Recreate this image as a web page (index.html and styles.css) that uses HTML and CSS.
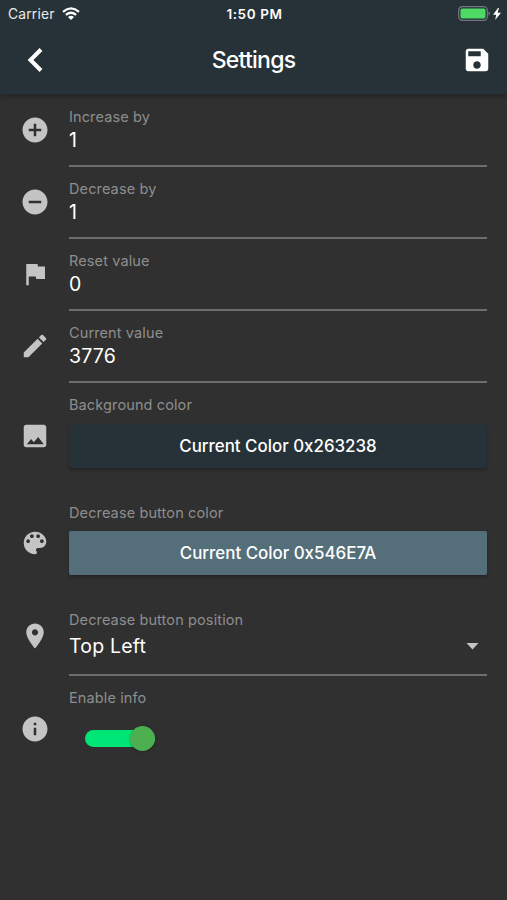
FILE: index.html
```html
<!DOCTYPE html>
<html lang="en">
<head>
<meta charset="utf-8">
<title>Settings</title>
<link rel="stylesheet" href="styles.css">
</head>
<body>
<header class="appbar">
  <div class="status">
    <div class="carrier"><span class="carrier-name">Carrier</span>
      <svg class="wifi" viewBox="0 0 18 13" fill="none" stroke="#fff" stroke-width="2.2"><path d="M1 4.8Q9-2 17 4.8M3.9 7.9Q9 3.6 14.1 7.9"/><path d="M6 10Q9 7.6 12 10L9 13Z" fill="#fff" stroke="none"/></svg>
    </div>
    <span class="time">1:50 PM</span>
    <div class="power">
      <svg class="battery" viewBox="0 0 32 15"><rect x=".7" y=".7" width="28.6" height="13.6" rx="3.6" fill="none" stroke="#6f797d" stroke-width="1.2"/><rect x="2.5" y="2.5" width="25" height="10" rx="1.7" fill="#4cd964"/><path d="M30.5 5.2Q32 6 32 7.5T30.5 9.8Z" fill="#6f797d"/></svg>
      <svg class="bolt" viewBox="0 0 8 12"><path d="M5 0L0 6.8H3.2L2.2 12L8 4.7H4.6L6 0Z" fill="#fff"/></svg>
    </div>
  </div>
  <div class="toolbar">
    <svg class="back" viewBox="0 0 16 26"><path d="M14 2.5L3.5 13L14 23.5" fill="none" stroke="#fff" stroke-width="4"/></svg>
    <h1 class="title">Settings</h1>
    <svg class="save" viewBox="0 0 24 24"><path fill="#fff" d="M17 3H5c-1.11 0-2 .9-2 2v14c0 1.1.89 2 2 2h14c1.1 0 2-.9 2-2V7l-4-4zm-5 16c-1.66 0-3-1.34-3-3s1.34-3 3-3 3 1.34 3 3-1.34 3-3 3zm3-10H5V5h10v4z"/></svg>
  </div>
</header>
<main class="settings">
  <section class="row">
    <svg class="icon" viewBox="0 0 24 24"><path d="M12 2C6.48 2 2 6.48 2 12s4.48 10 10 10 10-4.48 10-10S17.52 2 12 2zm5 11h-4v4h-2v-4H7v-2h4V7h2v4h4v2z"/></svg>
    <div class="field lined"><div class="label">Increase by</div><div class="value">1</div></div>
  </section>
  <section class="row">
    <svg class="icon" viewBox="0 0 24 24"><path d="M12 2C6.48 2 2 6.48 2 12s4.48 10 10 10 10-4.48 10-10S17.52 2 12 2zm5 11H7v-2h10v2z"/></svg>
    <div class="field lined"><div class="label">Decrease by</div><div class="value">1</div></div>
  </section>
  <section class="row">
    <svg class="icon" viewBox="0 0 24 24"><path d="M14.4 6L14 4H5v17h2v-7h5.6l.4 2h7V6z"/></svg>
    <div class="field lined"><div class="label">Reset value</div><div class="value">0</div></div>
  </section>
  <section class="row">
    <svg class="icon" viewBox="0 0 24 24"><path d="M3 17.25V21h3.75L17.81 9.94l-3.75-3.75L3 17.25zM20.71 7.04c.39-.39.39-1.02 0-1.41l-2.34-2.34c-.39-.39-1.02-.39-1.41 0l-1.83 1.83 3.75 3.75 1.83-1.83z"/></svg>
    <div class="field lined"><div class="label">Current value</div><div class="value">3776</div></div>
  </section>
  <section class="row tall">
    <svg class="icon" viewBox="0 0 24 24"><path d="M21 19V5c0-1.1-.9-2-2-2H5c-1.1 0-2 .9-2 2v14c0 1.1.9 2 2 2h14c1.1 0 2-.9 2-2zM8.900 14.3l2.200 2.700L14.500 12.700l4.500 5.800H5.500z"/></svg>
    <div class="field"><div class="label">Background color</div><button class="swatch navy">Current Color 0x263238</button></div>
  </section>
  <section class="row tall">
    <svg class="icon" viewBox="0 0 24 24"><path d="M12 3c-4.970 0-9 4.030-9 9s4.030 9 9 9c.83 0 1.500-.67 1.500-1.500 0-.39-.15-.74-.39-1.010-.23-.26-.38-.61-.38-.99 0-.83.67-1.500 1.500-1.500H16c2.760 0 5-2.240 5-5 0-4.420-4.030-8-9-8zm-5.500 9c-.83 0-1.500-.67-1.500-1.500S5.670 9 6.500 9 8 9.670 8 10.500 7.330 12 6.500 12zm3-4C8.670 8 8 7.330 8 6.500S8.670 5 9.500 5s1.500.67 1.500 1.500S10.330 8 9.500 8zm5 0c-.83 0-1.500-.67-1.500-1.500S13.670 5 14.500 5s1.500.67 1.500 1.500S15.330 8 14.500 8zm3 4c-.83 0-1.500-.67-1.500-1.500S16.670 9 17.500 9s1.500.67 1.500 1.500-.67 1.500-1.500 1.500z"/></svg>
    <div class="field"><div class="label">Decrease button color</div><button class="swatch slate">Current Color 0x546E7A</button></div>
  </section>
  <section class="row select-row">
    <svg class="icon" viewBox="0 0 24 24"><path d="M12 2C8.130 2 5 5.130 5 9c0 5.250 7 13 7 13s7-7.750 7-13c0-3.870-3.130-7-7-7zm0 9.500c-1.380 0-2.500-1.120-2.500-2.500s1.120-2.500 2.500-2.500 2.500 1.120 2.500 2.500-1.120 2.500-2.500 2.500z"/></svg>
    <div class="field lined"><div class="label">Decrease button position</div><div class="value choice"><span>Top Left</span><svg class="caret" viewBox="0 0 12 7"><path d="M0 0h12L6 6.5z"/></svg></div></div>
  </section>
  <section class="row tall">
    <svg class="icon" viewBox="0 0 24 24"><path d="M12 2C6.480 2 2 6.480 2 12s4.480 10 10 10 10-4.480 10-10S17.520 2 12 2zm1 15h-2v-6h2v6zm0-8h-2V7h2v2z"/></svg>
    <div class="field"><div class="label">Enable info</div><div class="switch"><div class="knob"></div></div></div>
  </section>
</main>
</body>
</html>
```
FILE: styles.css
```css
* { box-sizing: border-box; }
body {
  margin: 0;
  height: 900px;
  overflow: hidden;
  background: #303030;
  border-bottom: 1px solid #352c33;
  color: #fff;
  font-family: Inter, "Liberation Sans", sans-serif;
}
svg { display: block; flex: none; }
.appbar {
  height: 94px;
  background: #263238;
  box-shadow: 0 2px 5px rgba(0, 0, 0, .3);
}
.status {
  display: grid;
  grid-template-columns: 1fr auto 1fr;
  align-items: center;
  height: 27px;
  padding: 0 6px 0 8px;
  font-size: 13.8px;
}
.carrier { display: flex; align-items: center; gap: 7px; }
.carrier-name { letter-spacing: .2px; color: #e8eaeb; }
.wifi { width: 18px; height: 13px; }
.time { font-weight: 600; font-size: 13.5px; letter-spacing: .6px; }
.power { display: flex; justify-content: flex-end; align-items: center; gap: 3px; }
.battery { width: 32px; height: 15px; }
.bolt { width: 8px; height: 12px; }
.toolbar {
  display: grid;
  grid-template-columns: 40px 1fr 40px;
  align-items: center;
  height: 65px;
  padding: 0 15px 0 15px;
}
.back { width: 16px; height: 26px; margin-left: 12px; }
.title { margin: 0; text-align: center; font-size: 23px; font-weight: 500; letter-spacing: -.75px; }
.save { width: 30px; height: 30px; justify-self: end; }
.settings { padding: 1px 20px 0; }
.row { display: flex; align-items: center; gap: 19px; height: 72px; }
.tall { height: 107.6px; }
.select-row { height: 78px; }
.icon { width: 30px; height: 30px; margin-bottom: 2px; fill: #c4c4c4; }
.field { flex: 1; align-self: stretch; padding-top: 12px; }
.lined { border-bottom: 2px solid #6e6e6e; }
.label { height: 21px; line-height: 20px; font-size: 14.5px; letter-spacing: .12px; color: #8e8e8e; white-space: nowrap; }
.value { height: 24px; line-height: 24px; font-size: 19.5px; letter-spacing: .2px; }
.choice { display: flex; align-items: center; justify-content: space-between; margin-top: 3px; padding-right: 8px; }
.caret { width: 13px; height: 7px; fill: #c4c4c4; }
.swatch {
  display: block;
  width: 100%;
  height: 44px;
  margin-top: 7.500px;
  padding: 0;
  border: 0;
  border-radius: 2px;
  color: #fff;
  font: 500 16.9px Inter, "Liberation Sans", sans-serif;
  box-shadow: 0 2px 3px rgba(0, 0, 0, .25);
}
.navy { background: #263238; }
.slate { background: #546e7a; }
.switch {
  display: flex;
  align-items: center;
  justify-content: flex-end;
  width: 70px;
  height: 17px;
  margin: 21px 0 0 16px;
  border-radius: 9px;
  background: #00e676;
}
.knob { width: 25px; height: 25px; flex: none; border-radius: 50%; background: #4caf50; box-shadow: 0 1px 3px rgba(0, 0, 0, .25); }
```
